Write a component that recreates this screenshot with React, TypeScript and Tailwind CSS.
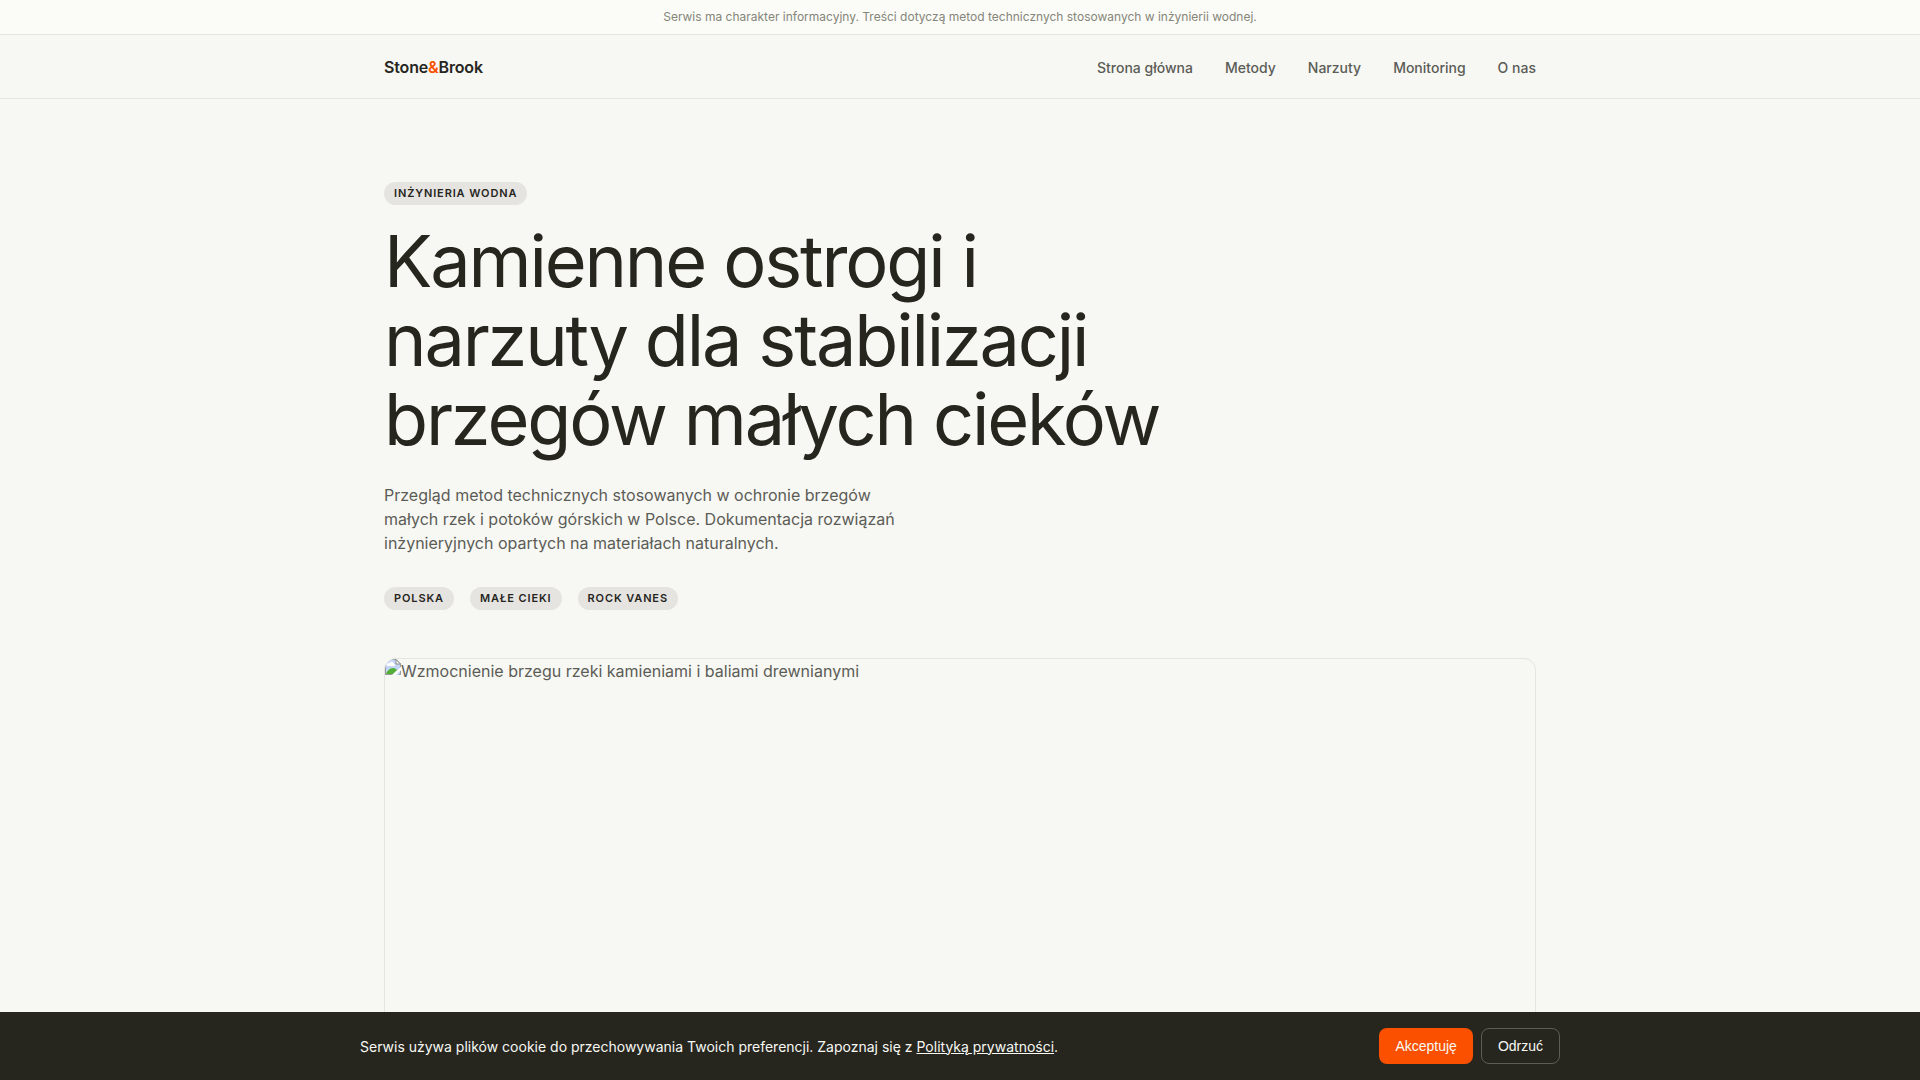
const navLinks = [
    { label: 'Strona główna', href: '#' },
    { label: 'Metody', href: '#metody' },
    { label: 'Narzuty', href: '#narzuty' },
    { label: 'Monitoring', href: '#monitoring' },
    { label: 'O nas', href: '#o-nas' },
];

const tags = ['Polska', 'Małe cieki', 'Rock vanes'];

function Tag({ children }: { children: string }) {
    return (
        <span className="inline-block rounded-full bg-[#e6e4e0] px-[10px] py-1 text-[11px] leading-[15px] font-semibold tracking-[0.08em] uppercase">
            {children}
        </span>
    );
}

function BrokenImageIcon() {
    return (
        <svg width="16" height="16" viewBox="0 0 16 16" className="shrink-0" aria-hidden="true">
            <path d="M0 0h11l5 5v11H0z" fill="#c3d5f5" />
            <path d="M2 5.5C2 4 4 3.500 4.500 4.500 5.500 2 9 2.500 9 5c1.500 0 1.500 2 0 2H3C1.500 7 1.200 6 2 5.500z" fill="#fff" />
            <path d="M1 15c1-3 4-6 7-6 2 0 3 1 4 2l-4 4z" fill="#53ae36" />
            <path d="M0.500 15.500V0.500H11L15.500 5v3M0.500 15.500H8M14 15.500h1.500V12" fill="none" stroke="#9a9a9a" />
            <path d="M11 0.500V5h4.500z" fill="#fff" stroke="#8b8b8b" />
            <path d="M7 16l9-8v3l-5 5z" fill="#fff" />
        </svg>
    );
}

function Header() {
    return (
        <header className="border-b border-[#e4e5e0]">
            <div className="mx-auto flex h-[63px] max-w-[1200px] items-center justify-between px-6">
                <a href="#" className="text-base font-semibold tracking-[-0.01em]">
                    Stone<span className="text-[#fa5000]">&amp;</span>Brook
                </a>
                <nav>
                    <ul className="flex gap-8">
                        {navLinks.map((link) => (
                            <li key={link.label}>
                                <a href={link.href} className="text-sm font-medium text-[#5c5c57]">
                                    {link.label}
                                </a>
                            </li>
                        ))}
                    </ul>
                </nav>
            </div>
        </header>
    );
}

function Hero() {
    return (
        <main className="mx-auto max-w-[1200px] px-6 pt-20 pb-24">
            <Tag>Inżynieria wodna</Tag>
            <h1 className="mt-4 max-w-[800px] text-[72px] leading-[79px] font-normal tracking-[-0.03em]">
                Kamienne ostrogi i narzuty dla stabilizacji brzegów małych cieków
            </h1>
            <p className="mt-[25px] max-w-[540px] text-base text-[#5c5c57]">
                Przegląd metod technicznych stosowanych w ochronie brzegów małych rzek i potoków górskich w Polsce.
                Dokumentacja rozwiązań inżynieryjnych opartych na materiałach naturalnych.
            </p>
            <div className="mt-8 flex gap-4">
                {tags.map((tag) => (
                    <Tag key={tag}>{tag}</Tag>
                ))}
            </div>

            {/* Hero picture */}
            <div className="mt-12 flex aspect-video items-start overflow-hidden rounded-xl border border-[#e4e5e0] text-[#5c5c57]">
                <BrokenImageIcon />
                <span>Wzmocnienie brzegu rzeki kamieniami i baliami drewnianymi</span>
            </div>
        </main>
    );
}

function CookieBar() {
    return (
        <div className="fixed inset-x-0 bottom-0 bg-[#26261f] py-4 text-[#f7f8f3]">
            <div className="mx-auto flex max-w-[1200px] items-center justify-between">
                <p className="text-sm leading-[21px]">
                    Serwis używa plików cookie do przechowywania Twoich preferencji. Zapoznaj się z{' '}
                    <a href="#prywatnosc" className="underline">
                        Polityką prywatności
                    </a>
                    .
                </p>
                <div className="flex gap-2 font-['Liberation_Sans',sans-serif] text-sm">
                    <button type="button" className="h-9 rounded-lg bg-[#fa5000] px-4">
                        Akceptuję
                    </button>
                    <button type="button" className="h-9 rounded-lg border border-[#5c5c57] px-4">
                        Odrzuć
                    </button>
                </div>
            </div>
        </div>
    );
}

export default function App() {
    return (
        <div className="min-h-screen bg-[#f7f8f3] font-['Inter',sans-serif] text-[#26261f]">
            <div className="border-b border-[#e4e5e0] bg-[#fbfcf7] py-2 text-center text-xs leading-[18px] text-[#85857a]">
                Serwis ma charakter informacyjny. Treści dotyczą metod technicznych stosowanych w inżynierii wodnej.
            </div>
            <Header />
            <Hero />
            <CookieBar />
        </div>
    );
}
